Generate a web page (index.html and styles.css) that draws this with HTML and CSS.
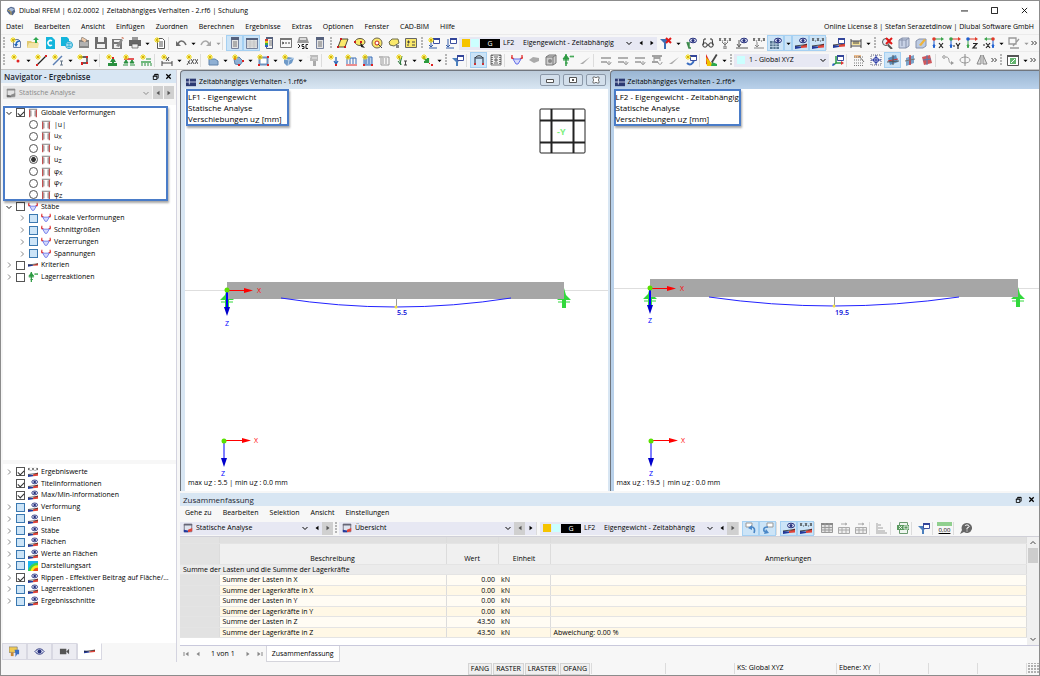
FILE: index.html
```html
<!DOCTYPE html>
<html lang="de">
<head>
    <meta charset="UTF-8">
    <meta name="viewport" content="width=device-width, initial-scale=1.0">
    <title>Dlubal RFEM | 6.02.0002 | Zeitabhängiges Verhalten - 2.rf6 | Schulung</title>
    <link rel="stylesheet" href="styles.css">
</head>
<body>
    <!-- Symbole -->
    <svg class="sprite" aria-hidden="true">
        <defs>
            <g id="star"><path d="M3 0v6M0 3h6M1 1l4 4M5 1L1 5" stroke="#f2de1c" stroke-width="1"/><circle cx="3" cy="3" r="1.3" fill="#d9b400"/></g>
            <g id="eye"><ellipse cx="8" cy="3.500" rx="3.500" ry="2.300" fill="#dfe3f5" stroke="#26307c"/><circle cx="8" cy="3.500" r="1.500" fill="#26307c"/></g>
            <g id="ramp"><path d="M0 12V9l6 .5V11z" fill="#233a9c"/><path d="M6 9l6-2.500v4L6 11z" fill="#e0453a"/><path d="M0 9l12-1.500" stroke="#222" stroke-width=".8"/></g>
            <g id="win"><path d="M5.500 1.500h6v5h-6z" fill="#fff" stroke="#3c4f9e"/><path d="M5 1h7v2H5z" fill="#33459a"/></g>
            <g id="dots"><path d="M0 1l2 3M2 1L0 4M5 1l2 3M7 1L5 4M10 1l2 3M12 1l-2 3M3 4h1M8 4h1" stroke="#333" stroke-width=".8"/></g>
        </defs>
        <symbol id="app" viewBox="0 0 12 12"><path d="M2 3l4-2 4 1 1 5-3 4-4-1-3-4z" fill="#53688e"/><path d="M3 4l3-2 4 2-3 3z" fill="#a9bcd8"/><path d="M2 5l4 2v4" stroke="#d8b24a" fill="none"/></symbol>
        <symbol id="new" viewBox="0 0 12 12"><path d="M3.500 2.500h5l2 2v6h-7z" fill="#e9f0fa" stroke="#6c7fa6"/><path d="M10 4c-3 0-4 2-4 4" stroke="#2467b8" fill="none" stroke-width="1.500"/><path d="M4 7h4l-2 3z" fill="#2467b8"/><use href="#star"/></symbol>
        <symbol id="open" viewBox="0 0 12 12"><path d="M0 4h4l1 1h6v6H0z" fill="#e0c871"/><path d="M2 6h10l-1 5H0z" fill="#f3e4a6"/><path d="M9 0l3 3h-2v3H8V3H6z" fill="#2da84f"/></symbol>
        <symbol id="cloud" viewBox="0 0 12 12"><path d="M2 0h6l3 3v9H2z" fill="#14b5dc"/><path d="M8 4a2.500 2.500 0 1 0 0 4" stroke="#fff" fill="none" stroke-width="1.500"/></symbol>
        <symbol id="cloudnet" viewBox="0 0 12 12"><path d="M0 0h6l2 2v7H0z" fill="#14b5dc"/><circle cx="8" cy="8" r="3.500" fill="#eefaff" stroke="#14a4d0"/><path d="M5 8h6M8 5v6M5.500 6.500h5M5.500 9.500h5" stroke="#14a4d0" stroke-width=".7"/></symbol>
        <symbol id="brief" viewBox="0 0 12 12"><path d="M1 3h10v8H1z" fill="#858585"/><path d="M4 0l5 3-2 3-4-3z" fill="#eec9a8" stroke="#555" stroke-width=".5"/><path d="M2 6h8M2 8h8" stroke="#ddd"/></symbol>
        <symbol id="save" viewBox="0 0 12 12"><path d="M0 0h11l1 1v11H0z" fill="#6e6e6e"/><path d="M3 0h6v5H3zM2 7h8v4H2z" fill="#f1f1f1"/></symbol>
        <symbol id="saveas" viewBox="0 0 12 12"><path d="M0 2h10v10H0z" fill="#777"/><path d="M2 3h6v2H2zM2 7h6v4H2z" fill="#f1f1f1"/><path d="M4 9l5-7 2 1-4 7z" fill="#8b8b8b"/><path d="M9 1l2-1 1 2z" fill="#cf6a4a"/></symbol>
        <symbol id="print" viewBox="0 0 12 12"><path d="M3 0h6v3H3z" fill="#999"/><path d="M0 3h12v6H0z" fill="#666"/><path d="M3 7h6v4H3z" fill="#eee" stroke="#555" stroke-width=".7"/></symbol>
        <symbol id="report" viewBox="0 0 12 12"><path d="M3.500 1.500h5l2 2v8h-7z" fill="#fff" stroke="#555"/><path d="M5 5h4M5 7h4M5 9h4" stroke="#555"/><use href="#star"/></symbol>
        <symbol id="undo" viewBox="0 0 12 12"><path d="M3 7c2-4 6-4 8 1" stroke="#6b6b6b" fill="none" stroke-width="1.500"/><path d="M1 4v5h5z" fill="#6b6b6b"/></symbol>
        <symbol id="redo" viewBox="0 0 12 12"><path d="M9 7c-2-4-6-4-8 1" stroke="#a9a9a9" fill="none" stroke-width="1.500"/><path d="M11 4v5H6z" fill="#a9a9a9"/></symbol>
        <symbol id="panel" viewBox="0 0 12 12"><path d="M2.500 .5h7v11h-7z" fill="#e4e4e4" stroke="#76819c"/><path d="M2 0h8v3H2z" fill="#56617c"/><path d="M4 5h4M4 7h4M4 9h4" stroke="#777"/></symbol>
        <symbol id="sheet" viewBox="0 0 12 12"><path d="M.5 1.500h11v10H.5z" fill="#e2e2e2" stroke="#76819c"/><path d="M0 1h12v2H0z" fill="#56617c"/><path d="M1 5h10M1 7h10M1 9h10M4 3v8M8 3v8" stroke="#bbb" stroke-width=".7"/></symbol>
        <symbol id="scale" viewBox="0 0 12 12"><path d="M3.500 .5h6v11h-6z" fill="#f4f4f4" stroke="#56617c"/><path d="M3 0h7v2H3z" fill="#56617c"/><path d="M2 2h3v2H2z" fill="#d43c2e"/><path d="M2 4h3v2H2z" fill="#e9c417"/><path d="M2 6h3v2H2z" fill="#35a84a"/><path d="M2 8h3v2H2z" fill="#2d5fc4"/><path d="M6 4h3M6 6h3M6 8h3" stroke="#777"/></symbol>
        <symbol id="console" viewBox="0 0 12 12"><path d="M.5 1.500h11v9H.5z" fill="#f8f8f8" stroke="#777"/><path d="M0 1h12v2H0z" fill="#777"/><path d="M2 5l2 1-2 1M5 6h2M8 6h2" stroke="#444" fill="none"/></symbol>
        <symbol id="script" viewBox="0 0 12 12"><path d="M2 0h8l2 6H0z" fill="#999"/><path d="M3 1h6v2H3z" fill="#ddd"/><path d="M1 7l2 2-2 2M7 7.500H5v2h2v2H5M11 7.500H9v4h2" stroke="#222" fill="none"/></symbol>
        <symbol id="sel" viewBox="0 0 12 12"><path d="M4 2h7L8 10H1z" fill="#fbe96b" stroke="#4d4d3d"/><path d="M3 1h2v2H3zM0 9h2v2H0zM7 9h2v2H7z" fill="#c92020"/></symbol>
        <symbol id="lasso" viewBox="0 0 12 12"><ellipse cx="6" cy="5" rx="5" ry="3.500" fill="#fbe96b" stroke="#5d5540"/><path d="M6 5l5 6-4-1z" fill="#222"/><path d="M0 4h2v2H0zM6 4h2v2H6z" fill="#c92020"/></symbol>
        <symbol id="ring" viewBox="0 0 12 12"><circle cx="6" cy="6" r="5" fill="#fbe96b" stroke="#6d6550"/><circle cx="6" cy="6" r="2" fill="#fff" stroke="#c92020"/><path d="M7 7l4 4" stroke="#444"/></symbol>
        <symbol id="poly" viewBox="0 0 12 12"><path d="M1 5l3-3h6l1 4-5 3-4-1z" fill="#fbe96b" stroke="#6c6c4c"/><path d="M8 8h3v3H8z" fill="#888"/></symbol>
        <symbol id="calc" viewBox="0 0 12 12"><path d="M.5 1.500h11v9H.5z" fill="#fbe96b" stroke="#666"/><path d="M2 5h3M3.500 3.500v3M7 5h3M2 8h2M7 8h3" stroke="#444"/></symbol>
        <symbol id="loadnew" viewBox="0 0 12 12"><path d="M3 4v6M1 8l2 2 2-2M1 11h8" stroke="#345da8" fill="none"/><use href="#win"/><use href="#star"/></symbol>
        <symbol id="load" viewBox="0 0 12 12"><path d="M3 2v8M1 8l2 2 2-2M1 11h8" stroke="#345da8" fill="none"/><use href="#win"/></symbol>
        <symbol id="filterx" viewBox="0 0 12 12"><path d="M0 2h9L6 6v6H4V6z" fill="#3c6fb5"/><path d="M6 1l5 5M11 1L6 6" stroke="#e01818" stroke-width="2"/></symbol>
        <symbol id="filter" viewBox="0 0 12 12"><path d="M0 4h9L6 8v4H4V8z" fill="#4b7fbd"/><use href="#win"/></symbol>
        <symbol id="eyemark" viewBox="0 0 12 12"><path d="M2 5l2 6h2M4 5v6" stroke="#3b8a4b" fill="none" stroke-width="1.500"/><use href="#eye"/></symbol>
        <symbol id="glasses" viewBox="0 0 12 12"><circle cx="3" cy="8" r="2.200" fill="none" stroke="#333"/><circle cx="9" cy="8" r="2.200" fill="none" stroke="#333"/><path d="M1 8l1-6h2M11 8l-1-6H8M5 8h2" stroke="#333" fill="none"/></symbol>
        <symbol id="xvals" viewBox="0 0 12 12"><use href="#dots"/><path d="M6 5v3M3 5l3 3M9 5L6 8M5 9h2v3H5z" stroke="#777" fill="none"/></symbol>
        <symbol id="eyeload" viewBox="0 0 12 12"><path d="M3 3v6M1 7l2 3 2-3M0 11h12" stroke="#555" fill="none"/><use href="#eye"/></symbol>
        <symbol id="xload" viewBox="0 0 12 12"><use href="#dots"/><path d="M4 5v5M2 8l2 2 2-2M1 11h10" stroke="#888" fill="none"/></symbol>
        <symbol id="eyegrid" viewBox="0 0 12 12"><path d="M0 4h9v8H0z" fill="#557690"/><path d="M0 7h9M0 9.500h9M3 4v8M6 4v8" stroke="#c6dcec" stroke-width=".8"/><use href="#eye"/></symbol>
        <symbol id="eyeramp" viewBox="0 0 12 12"><use href="#ramp"/><use href="#eye"/></symbol>
        <symbol id="xramp" viewBox="0 0 12 12"><use href="#ramp"/><use href="#dots"/></symbol>
        <symbol id="rampwin" viewBox="0 0 12 12"><use href="#ramp" y="-1"/><use href="#win"/></symbol>
        <symbol id="rampi" viewBox="0 0 12 12"><path d="M0 8V5l6 1v1z" fill="#233a9c"/><path d="M6 6l6-2v2.500L6 7z" fill="#e0453a"/><path d="M0 6l12-1.500" stroke="#222" stroke-width=".8"/></symbol>
        <symbol id="ruler" viewBox="0 0 12 12"><path d="M1 2v9M11 2v9M1 4h10M1 9h10" stroke="#444"/><path d="M2 5h8v3H2z" fill="#f3e19a"/><path d="M4 4v3M6 4v3M8 4v3" stroke="#444"/></symbol>
        <symbol id="zoomx" viewBox="0 0 12 12"><circle cx="5" cy="5" r="3.500" fill="#e8eef5" stroke="#555"/><path d="M7 8l4 4" stroke="#555" stroke-width="2"/><path d="M5 1l6 6M11 1L5 7" stroke="#e01818" stroke-width="2"/></symbol>
        <symbol id="box" viewBox="0 0 12 12"><path d="M1 3l3-2h7v8l-3 2H1z" fill="#c8d2e6" stroke="#8792ac"/><path d="M1 3h7v8M8 3l3-2M4 1v8" stroke="#8792ac" fill="none"/></symbol>
        <symbol id="boxpen" viewBox="0 0 12 12"><path d="M1 4l3-2h7v7l-3 2H1z" fill="#bccbe3" stroke="#8792ac"/><path d="M4 8l5-6 2 1-5 6z" fill="#efb43a"/></symbol>
        <symbol id="axx" viewBox="0 0 12 12"><path d="M2 2h7" stroke="#3aa34a"/><path d="M2 2v6M1 8l1 3 1-3z" stroke="#1e5fd0" fill="#1e5fd0"/><path d="M9 0l3 2-3 2z" fill="#3aa34a"/><circle cx="2" cy="2" r="1.800" fill="#e03a2a"/><path d="M7 6l4 5M11 6l-4 5" stroke="#222" stroke-width="1.200"/></symbol>
        <symbol id="axy" viewBox="0 0 12 12"><path d="M2 2h7" stroke="#e03a2a"/><path d="M2 2v6M1 8l1 3 1-3z" stroke="#1e5fd0" fill="#1e5fd0"/><path d="M9 0l3 2-3 2z" fill="#e03a2a"/><circle cx="2" cy="2" r="1.800" fill="#3aa34a"/><path d="M7 6l2 3 2-3M9 9v3M4 9h2" stroke="#222" fill="none" stroke-width="1.200"/></symbol>
        <symbol id="axz" viewBox="0 0 12 12"><path d="M2 2h7" stroke="#e03a2a"/><path d="M2 2v6M1 8l1 3 1-3z" stroke="#3aa34a" fill="#3aa34a"/><path d="M9 0l3 2-3 2z" fill="#e03a2a"/><circle cx="2" cy="2" r="1.800" fill="#1e5fd0"/><path d="M7 6.500h4l-4 4.500h4" stroke="#222" fill="none" stroke-width="1.200"/></symbol>
        <symbol id="axmx" viewBox="0 0 12 12"><path d="M10 2H4" stroke="#3aa34a"/><path d="M4 0L1 2l3 2z" fill="#3aa34a"/><path d="M10 2v6M9 8l1 3 1-3z" stroke="#1e5fd0" fill="#1e5fd0"/><circle cx="10" cy="2" r="1.800" fill="#e03a2a"/><path d="M3 6l4 5M7 6l-4 5M0 8h2" stroke="#222" stroke-width="1.200"/></symbol>
        <symbol id="axes" viewBox="0 0 12 12"><path d="M4 2v7l-3 2M4 9h6" stroke="#2a9a45" fill="none" stroke-width="1.500"/><path d="M9 7l3 2-3 2z" fill="#d33"/><path d="M0 12l1-3 2 2z" fill="#2452c8"/><use href="#win"/></symbol>
        <symbol id="measure" viewBox="0 0 12 12"><path d="M1 1h7v6H1zM2 11h9M11 2L5 9" stroke="#999" fill="none" stroke-width="1.300"/></symbol>
        <symbol id="node" viewBox="0 0 12 12"><circle cx="8" cy="7" r="1.500" fill="#e02222"/><use href="#star" x="1"/></symbol>
        <symbol id="line" viewBox="0 0 12 12"><path d="M2 11l9-9" stroke="#222" stroke-width="1.300"/><use href="#star"/><path d="M1 10h2v2H1zM10 1h2v2h-2z" fill="#d22"/></symbol>
        <symbol id="member" viewBox="0 0 12 12"><path d="M1 11l9-9" stroke="#5b7fb4" stroke-width="1.500"/><path d="M8 7h3M9.500 7v4M8 11h3" stroke="#678"/><use href="#star"/></symbol>
        <symbol id="arc" viewBox="0 0 12 12"><path d="M3 3h7v6H6" stroke="#333" fill="none" stroke-width="1.300"/><path d="M9 2h2v2H9zM9 8h2v2H9zM4 8h2v3H4z" fill="#d22"/><use href="#star"/></symbol>
        <symbol id="support" viewBox="0 0 12 12"><path d="M7 3l3 5H8v1h3v3H2V9h4V8H4z" fill="#29903f"/><path d="M6 3h2v2H6z" fill="#d22"/><use href="#star"/></symbol>
        <symbol id="support2" viewBox="0 0 12 12"><path d="M1 5h10" stroke="#d22" stroke-width="1.500"/><path d="M3 6l2 3H1zM9 6l2 3H7zM0 11h5M7 11h5" stroke="#29903f" fill="#29903f"/><use href="#star"/></symbol>
        <symbol id="support3" viewBox="0 0 12 12"><path d="M1 7h10v2H1z" fill="#6db87b"/><path d="M2 9v3M5 9v3M8 9v3M11 9v3M6 5h5" stroke="#29903f"/><use href="#star"/></symbol>
        <symbol id="dim" viewBox="0 0 12 12"><path d="M1 7v5M11 7v5M1 9h10M5 3l3 4M8 3l-3 4" stroke="#444"/><use href="#star"/></symbol>
        <symbol id="dim2" viewBox="0 0 12 12"><path d="M1 11l3-5M4 10L2 7M5 5l3 5M8 5l-3 5M9 5l3 5M12 5l-3 5" stroke="#444" stroke-width=".9"/><use href="#star"/></symbol>
        <symbol id="surface" viewBox="0 0 12 12"><path d="M2 5h6l3 2v4H2z" fill="#8fb0d4" stroke="#5f82ab"/><use href="#star"/></symbol>
        <symbol id="solid" viewBox="0 0 12 12"><path d="M2 5l5-2 4 4-3 4-5-1z" fill="#8fb0d4" stroke="#5f82ab"/><path d="M2 4h2v2H2zM10 6h2v2h-2zM6 10h2v2H6z" fill="#d22"/><use href="#star"/></symbol>
        <symbol id="opening" viewBox="0 0 12 12"><path d="M2.500 3.500h8v7h-8z" fill="#fff" stroke="#6f93c0" stroke-width="2"/><path d="M1 10h2v2H1zM10 10h2v2h-2zM10 2h2v2h-2z" fill="#d22"/><use href="#star"/></symbol>
        <symbol id="cube" viewBox="0 0 12 12"><path d="M2 5l4-2 6 1-2 5-5 3-3-3z" fill="#6f9ac8"/><path d="M2 5l5 1 5-2M7 6l-1 6" stroke="#cfe2f4" fill="none" stroke-width=".8"/><use href="#star"/></symbol>
        <symbol id="stamp" viewBox="0 0 12 12"><path d="M3 1h8v6H3z" fill="#bbb"/><path d="M6 7h3v5H6z" fill="#aaa"/><path d="M0 3h4M5 4h5" stroke="#eee"/></symbol>
        <symbol id="nodeload" viewBox="0 0 12 12"><path d="M8 3v6M6 7l2 3 2-3" stroke="#2e68b7" fill="none" stroke-width="1.300"/><use href="#star"/><path d="M7 10h2v2H7z" fill="#d22"/></symbol>
        <symbol id="lineload" viewBox="0 0 12 12"><path d="M1 4h10M2 4v6M5 4v6M8 4v6M11 4v6" stroke="#3a6fb7"/><path d="M1 11h11" stroke="#d22"/><use href="#star"/></symbol>
        <symbol id="areaload" viewBox="0 0 12 12"><path d="M2 3h8v8H2z" fill="#bcd2ec" stroke="#3a6fb7"/><path d="M4 4v6M7 4v6" stroke="#3a6fb7"/><path d="M1 10h2v2H1zM9 10h2v2H9z" fill="#d22"/><use href="#star"/></symbol>
        <symbol id="grayload" viewBox="0 0 12 12"><path d="M2 3h8v8H2zM4 4v6M7 4v6" fill="none" stroke="#999"/><path d="M0 3h4" stroke="#bbb" stroke-width="2"/></symbol>
        <symbol id="imperf" viewBox="0 0 12 12"><path d="M3 2l2 9M6 2l-2 8M2 7l3 4" stroke="#2c7a3b" fill="none"/><path d="M8 7h3M9.500 7v4M8 11h3" stroke="#444"/><use href="#star"/></symbol>
        <symbol id="plant" viewBox="0 0 12 12"><path d="M2 3l4 4M3 8l4 0V4" stroke="#2c9a3b" fill="none" stroke-width="2.200"/><path d="M8 9h1v1H8zM10 10h2v2h-2z" fill="#d22"/><use href="#star"/></symbol>
        <symbol id="frame" viewBox="0 0 12 12"><path d="M2 11V4h8v7" fill="none" stroke="#55657a" stroke-width="1.500"/><path d="M2 4c2-3 6-3 8 0" fill="none" stroke="#333"/><path d="M1 9h2v2H1zM9 9h2v2H9z" fill="#c33"/></symbol>
        <symbol id="framered" viewBox="0 0 12 12"><path d="M2 2v9M10 2v9" fill="none" stroke="#c24b4b" stroke-width="1.500"/><path d="M1 1.500h10M3.500 3v7M8.500 3v7" fill="none" stroke="#666"/></symbol>
        <symbol id="film" viewBox="0 0 12 12"><path d="M1 1h10v10H1z" fill="#eee" stroke="#777"/><path d="M2 1v10M10 1v10" stroke="#555" stroke-width="1.500" stroke-dasharray="1 1"/><path d="M4 3h4M4 9h4M6 4v4M4 6h4" fill="none" stroke="#666"/></symbol>
        <symbol id="bend" viewBox="0 0 12 12"><path d="M1 1v4M11 1v4M0 3l3 2M12 3L9 5" stroke="#e03333" stroke-width="1.300"/><path d="M2 5h8L7 10H5z" fill="#d6d9fb" stroke="#6470e8"/></symbol>
        <symbol id="slab" viewBox="0 0 12 12"><path d="M1 6l4-3 6 1v3L6 9z" fill="#aaa"/></symbol>
        <symbol id="solidg" viewBox="0 0 12 12"><path d="M1 3l3-2h7v8l-3 2H1z" fill="#ccc" stroke="#777"/><path d="M1 3h7v8M8 3l3-2" stroke="#777" fill="none"/><circle cx="5" cy="7" r="2" fill="#888"/></symbol>
        <symbol id="react" viewBox="0 0 12 12"><path d="M4 0v12" stroke="#2d9a42" stroke-width="1.500"/><path d="M1 5l3-4 3 4zM1 6h6M3 9h3" fill="#2d9a42" stroke="#2d9a42"/><path d="M8 2h4v1H8z" fill="#6cbf79" stroke="#2d9a42" stroke-width=".6"/></symbol>
        <symbol id="slope" viewBox="0 0 12 12"><path d="M1 10l10-7-7 7z" fill="#aaa"/></symbol>
        <symbol id="sect" viewBox="0 0 12 12"><path d="M1 4h10M1 8h6" stroke="#999" stroke-width="1.300"/><path d="M7 8c0 3 4 3 4 0M9 7v4" stroke="#999" fill="none"/></symbol>
        <symbol id="sectx" viewBox="0 0 12 12"><path d="M1 2h10M3 4h6M1 8h6" stroke="#888" stroke-width="1.300"/><path d="M7 8c0 3 4 3 4 0M3 2v5M9 2v5" stroke="#999" fill="none"/></symbol>
        <symbol id="sectnew" viewBox="0 0 12 12"><path d="M2 9c3 3 6 1 7-3" stroke="#3c6fc2" fill="none" stroke-width="2"/><use href="#win"/><use href="#star"/></symbol>
        <symbol id="colors" viewBox="0 0 12 12"><path d="M0 0l6 12L0 10z" fill="#d22"/><path d="M0 3l8 9H1z" fill="#f0c400"/><path d="M5 12l1-4 5 2v2z" fill="#2da84f"/><path d="M5 8l5-8 1.500 1-5 8z" fill="#444"/></symbol>
        <symbol id="gridset" viewBox="0 0 12 12"><path d="M1 1h7v3H1z" fill="#eab98a"/><path d="M1 3h10M1 6h10M1 9h10M1 11.500h10" stroke="#777" stroke-dasharray="1 1"/><path d="M6 2l5 6" stroke="#777"/></symbol>
        <symbol id="snap" viewBox="0 0 12 12"><path d="M1 1h10v10H1z" fill="none" stroke="#667" stroke-dasharray="1 1"/><circle cx="6" cy="6" r="2.500" fill="#fff" stroke="#2030a0"/><path d="M6 1v10M1 6h10" stroke="#2030a0"/></symbol>
        <symbol id="plane" viewBox="0 0 12 12"><path d="M1 4l8-3 2 7-8 3z" fill="#5a8fbe"/><path d="M1 7l10-2" stroke="#c33"/><path d="M0 8l12-1M6 1v10" stroke="#555"/></symbol>
        <symbol id="planey" viewBox="0 0 12 12"><path d="M2 4l8-3v8l-8 3z" fill="#7aa3c9"/><path d="M6 1v10" stroke="#c33" stroke-width="1.500"/><path d="M1 7l10-2" stroke="#777"/></symbol>
        <symbol id="planez" viewBox="0 0 12 12"><path d="M1 3l8-2 2 8-8 2z" fill="#d0575c"/><path d="M2 6l8-1M6 1v10" stroke="#4d82b8"/></symbol>
        <symbol id="move" viewBox="0 0 12 12"><circle cx="2" cy="3" r="1.300" fill="none" stroke="#999"/><path d="M4 3c5 0 1 7 6 6" stroke="#999" fill="none"/><path d="M9 7l3 2-3 2z" fill="#999"/></symbol>
        <symbol id="rotate" viewBox="0 0 12 12"><ellipse cx="6" cy="6" rx="5" ry="3" fill="none" stroke="#999"/><path d="M6 0v12" stroke="#888"/></symbol>
        <symbol id="mirror" viewBox="0 0 12 12"><path d="M5 1v9H1zM7 1v9h4z" fill="#ddd" stroke="#888"/></symbol>
        <symbol id="viewset" viewBox="0 0 12 12"><path d="M.5 1.500h11v10H.5z" fill="#fff" stroke="#555"/><path d="M0 1h12v2H0z" fill="#555"/><path d="M3 4h6v6H3z" fill="#62b36e"/><path d="M4 9l4-4" stroke="#fff"/></symbol>
        <symbol id="result" viewBox="0 0 12 12"><path d="M1.500 1.500h9v9h-9z" fill="#dfe3ee" stroke="#667"/><path d="M1 1h10v2H1z" fill="#667"/><path d="M1 8l5 1v2H1z" fill="#233a9c"/><path d="M6 8l5-2v4l-5 1z" fill="#e0453a"/></symbol>
        <symbol id="link1" viewBox="0 0 12 12"><path d="M1 1h6v4H1z" fill="#fff" stroke="#999"/><path d="M6 5c4 0 4 3 3 6" stroke="#4a87c7" fill="none" stroke-width="1.600"/><path d="M3 6l4-3v5z" fill="#4a87c7"/></symbol>
        <symbol id="link2" viewBox="0 0 12 12"><path d="M5 1h6v4H5z" fill="#fff" stroke="#999"/><path d="M6 5c-5 0-5 3-3 5" stroke="#4a87c7" fill="none" stroke-width="1.600"/><path d="M2 12l5-1-3-4z" fill="#4a87c7"/></symbol>
        <symbol id="rows" viewBox="0 0 12 12"><path d="M.5 1.500h11v9H.5z" fill="#e2e2e2" stroke="#999"/><path d="M0 1h12v2H0z" fill="#888"/><path d="M0 5.500h12M0 8h12M4 1v10M8 1v10" stroke="#999"/></symbol>
        <symbol id="rowsup" viewBox="0 0 12 12"><path d="M.5 5.500h11v6H.5z" fill="#eee" stroke="#aaa"/><path d="M0 8h12M4 5v6M8 5v6M3 2h5M7 1l2 1-2 1" stroke="#aaa" fill="none"/></symbol>
        <symbol id="chart" viewBox="0 0 12 12"><path d="M1 1v10h10M2 3h3M2 6h5M2 9h7" stroke="#ccc" fill="none" stroke-width="2"/></symbol>
        <symbol id="excel" viewBox="0 0 12 12"><path d="M2.500 .5h8v11h-8z" fill="#eef6ef" stroke="#6b9a70"/><path d="M0 3h12v5H0z" fill="#5a9a5f"/><path d="M2 4l3 3M5 4L2 7M7 4h4v3H7z" stroke="#fff" fill="none" stroke-width=".8"/></symbol>
        <symbol id="help" viewBox="0 0 12 12"><path d="M7 1a5 5 0 1 1-3 9l-4 2 2-4a5 5 0 0 1 5-7z" fill="#666"/><path d="M5 4c1-2 5-1 4 1L7 6v1.500M7 8.500v1" stroke="#fff" fill="none"/></symbol>
        <symbol id="data" viewBox="0 0 12 12"><path d="M0 1h9v6H0z" fill="#f0ca52" stroke="#777" stroke-width=".7"/><path d="M6 4h5v5H9l-2 3V8z" fill="#3c6fc2"/><path d="M2 7h3v4H2z" fill="#c98832"/></symbol>
        <symbol id="eyebig" viewBox="0 0 12 12"><path d="M1 6c3-4 7-4 10 0-3 4-7 4-10 0z" fill="#dfe3f5" stroke="#26307c"/><circle cx="6" cy="6" r="2.200" fill="#26307c"/></symbol>
        <symbol id="camera" viewBox="0 0 12 12"><path d="M1 3h7v6H1zM8 6l3-3v6z" fill="#555"/></symbol>
        <symbol id="rainbow" viewBox="0 0 12 12"><path d="M0 0h12v12H0z" fill="#19b7ee"/><path d="M0 12A12 12 0 0 1 12 2v10z" fill="#3bd64d"/><path d="M3 12a9 9 0 0 1 9-7v7z" fill="#f7ec1a"/><path d="M6 12a6 6 0 0 1 6-4v4z" fill="#f0501c"/></symbol>
        <symbol id="file" viewBox="0 0 12 12"><path d="M0 2h12v9H0z" fill="#2c3a72"/><path d="M4 2v7M0 6h12" stroke="#dfe6f6"/></symbol>
        <symbol id="down" viewBox="0 0 6 6"><path d="M.5 2h5L3 4.800z" fill="currentColor"/></symbol>
        <symbol id="prev" viewBox="0 0 6 6"><path d="M4.500 .8v4.400L1.500 3z" fill="currentColor"/></symbol>
        <symbol id="next" viewBox="0 0 6 6"><path d="M1.500 .8v4.400L4.500 3z" fill="currentColor"/></symbol>
        <symbol id="first" viewBox="0 0 6 6"><path d="M5.500 .8v4.400L2.500 3zM.5 1h1v4h-1z" fill="currentColor"/></symbol>
        <symbol id="last" viewBox="0 0 6 6"><path d="M.5 .8v4.400L3.500 3zM4.500 1h1v4h-1z" fill="currentColor"/></symbol>
        <symbol id="chev" viewBox="0 0 6 6"><path d="M.5 2l2.500 2.500L5.500 2" fill="none" stroke="currentColor"/></symbol>
        <symbol id="chevr" viewBox="0 0 6 6"><path d="M2 .5l2.500 2.500L2 5.500" fill="none" stroke="currentColor"/></symbol>
        <symbol id="chevu" viewBox="0 0 6 6"><path d="M.5 4l2.500-2.500L5.500 4" fill="none" stroke="currentColor"/></symbol>
        <symbol id="more" viewBox="0 0 6 6"><path d="M.5 1l2 2-2 2M3.500 1l2 2-2 2" fill="none" stroke="currentColor" stroke-width=".8"/></symbol>
        <symbol id="close" viewBox="0 0 8 8"><path d="M1 1l6 6M7 1L1 7" stroke="currentColor" fill="none"/></symbol>
        <symbol id="closeb" viewBox="0 0 8 8"><path d="M1.500 1.500l5 5M6.500 1.500l-5 5" stroke="currentColor" stroke-width="1.500" fill="none"/></symbol>
        <symbol id="closeo" viewBox="0 0 8 8"><path d="M1 1h2l1 1 1-1h2v2L6 4l1 1v2H5L4 6 3 7H1V5l1-1-1-1z" fill="#fff" stroke="currentColor" stroke-width=".8"/></symbol>
        <symbol id="max" viewBox="0 0 8 8"><path d="M.5 .5h7v7h-7z" stroke="currentColor" fill="none"/></symbol>
        <symbol id="maxo" viewBox="0 0 8 8"><path d="M.5 1.500h7v5h-7z" stroke="currentColor" fill="#fff"/><path d="M3 3h2v2H3z" fill="currentColor"/></symbol>
        <symbol id="min" viewBox="0 0 8 8"><path d="M0 4.500h8" stroke="currentColor"/></symbol>
        <symbol id="mino" viewBox="0 0 8 8"><path d="M.5 3.500h7v3h-7z" stroke="currentColor" fill="#fff"/></symbol>
        <symbol id="float" viewBox="0 0 8 8"><path d="M1.500 3.500h4v4h-4zM3 3V1.500h4V6H6" stroke="currentColor" fill="none"/><path d="M1 3h5v1H1zM3 1h4v1H3z" fill="currentColor"/></symbol>
        <symbol id="hold" viewBox="0 0 14 20"><path d="M7 0l2 7 5 5H9v8H5v-8H0l5-5z" fill="#32d83c"/><path d="M1 14h12" stroke="#32d83c"/></symbol>
    </svg>

    <div class="app">
        <header class="titlebar">
            <svg class="ico"><use href="#app"/></svg>
            <h1>Dlubal RFEM | 6.02.0002 | Zeitabhängiges Verhalten - 2.rf6 | Schulung</h1>
            <button class="win-btn" title="Minimieren"><svg><use href="#min"/></svg></button>
            <button class="win-btn" title="Maximieren"><svg><use href="#max"/></svg></button>
            <button class="win-btn" title="Schließen"><svg><use href="#close"/></svg></button>
        </header>

        <nav class="menubar">
            <a href="#">Datei</a>
            <a href="#">Bearbeiten</a>
            <a href="#">Ansicht</a>
            <a href="#">Einfügen</a>
            <a href="#">Zuordnen</a>
            <a href="#">Berechnen</a>
            <a href="#">Ergebnisse</a>
            <a href="#">Extras</a>
            <a href="#">Optionen</a>
            <a href="#">Fenster</a>
            <a href="#">CAD-BIM</a>
            <a href="#">Hilfe</a>
            <span class="license">Online License 8 | Stefan Serazetdinow | Dlubal Software GmbH</span>
        </nav>

        <!-- Symbolleiste 1 -->
        <div class="toolbar">
            <i class="grip"></i>
            <button class="tb" title="Neu"><svg><use href="#new"/></svg></button>
            <button class="tb" title="Öffnen"><svg><use href="#open"/></svg></button>
            <button class="tb" title="Dlubal Center"><svg><use href="#cloud"/></svg></button>
            <button class="tb" title="Cloud"><svg><use href="#cloudnet"/></svg></button>
            <button class="tb" title="Modelle verwalten"><svg><use href="#brief"/></svg></button>
            <button class="tb" title="Speichern"><svg><use href="#save"/></svg></button>
            <button class="tb" title="Speichern unter"><svg><use href="#saveas"/></svg></button>
            <button class="tb" title="Drucken"><svg><use href="#print"/></svg></button>
            <button class="drop" title="Druckoptionen"><svg><use href="#down"/></svg></button>
            <button class="tb" title="Ausdruckprotokoll"><svg><use href="#report"/></svg></button>
            <i class="sep"></i>
            <button class="tb" title="Rückgängig"><svg><use href="#undo"/></svg></button>
            <button class="drop" title="Rückgängig-Liste"><svg><use href="#down"/></svg></button>
            <button class="tb" title="Wiederherstellen"><svg><use href="#redo"/></svg></button>
            <button class="drop off" title="Wiederherstellen-Liste"><svg><use href="#down"/></svg></button>
            <i class="sep"></i>
            <button class="tb on" title="Navigator"><svg><use href="#panel"/></svg></button>
            <button class="tb on" title="Tabellen"><svg><use href="#sheet"/></svg></button>
            <button class="tb" title="Steuerpanel"><svg><use href="#scale"/></svg></button>
            <button class="tb" title="Konsole"><svg><use href="#console"/></svg></button>
            <button class="tb" title="Skript"><svg><use href="#script"/></svg></button>
            <button class="tb" title="Eigenschaften"><svg><use href="#panel"/></svg></button>
            <i class="grip"></i>
            <button class="tb" title="Auswahl Raute"><svg><use href="#sel"/></svg></button>
            <button class="tb" title="Auswahl Ellipse"><svg><use href="#lasso"/></svg></button>
            <button class="tb" title="Auswahl Ring"><svg><use href="#ring"/></svg></button>
            <button class="tb" title="Auswahl Polygon"><svg><use href="#poly"/></svg></button>
            <button class="tb" title="Auswahl speziell"><svg><use href="#calc"/></svg></button>
            <i class="grip"></i>
            <button class="tb" title="Neuer Lastfall"><svg><use href="#loadnew"/></svg></button>
            <button class="tb" title="Lastfälle"><svg><use href="#load"/></svg></button>
            <div class="combo combo-case">
                <i class="swatch yellow"></i><i class="swatch cyan"></i><b class="tag">G</b><span class="case-no">LF2</span>
                <select aria-label="Lastfall"><option>Eigengewicht - Zeitabhängig</option></select>
                <svg><use href="#chev"/></svg>
            </div>
            <button class="step" title="Vorheriger"><svg><use href="#prev"/></svg></button>
            <button class="step" title="Nächster"><svg><use href="#next"/></svg></button>
            <button class="tb" title="Filter löschen"><svg><use href="#filterx"/></svg></button>
            <button class="drop" title="Filteroptionen"><svg><use href="#down"/></svg></button>
            <button class="tb" title="Lasten anzeigen"><svg><use href="#eyemark"/></svg></button>
            <button class="tb" title="Ergebnisse anzeigen"><svg><use href="#glasses"/></svg></button>
            <button class="tb" title="Werte"><svg><use href="#xvals"/></svg></button>
            <button class="tb" title="Last sichtbar"><svg><use href="#eyeload"/></svg></button>
            <button class="tb" title="Lastwerte"><svg><use href="#xload"/></svg></button>
            <button class="tb on" title="FE-Netz"><svg><use href="#eyegrid"/></svg></button>
            <button class="drop on" title="FE-Netz-Optionen"><svg><use href="#down"/></svg></button>
            <button class="tb on" title="Ergebnisse"><svg><use href="#eyeramp"/></svg></button>
            <button class="tb on" title="Ergebniswerte"><svg><use href="#xramp"/></svg></button>
            <i class="sep"></i>
            <button class="tb" title="Ergebnistabelle"><svg><use href="#rampwin"/></svg></button>
            <button class="tb" title="Maßstab"><svg><use href="#ruler"/></svg></button>
            <button class="drop" title="Maßstaboptionen"><svg><use href="#down"/></svg></button>
            <i class="grip"></i>
            <button class="tb" title="Zoom"><svg><use href="#zoomx"/></svg></button>
            <button class="tb" title="Isometrie"><svg><use href="#box"/></svg></button>
            <button class="tb" title="Ansicht bearbeiten"><svg><use href="#boxpen"/></svg></button>
            <button class="tb" title="Ansicht in X"><svg><use href="#axx"/></svg></button>
            <button class="tb" title="Ansicht gegen Y"><svg><use href="#axy"/></svg></button>
            <button class="tb" title="Ansicht in Z"><svg><use href="#axz"/></svg></button>
            <button class="tb" title="Ansicht gegen X"><svg><use href="#axmx"/></svg></button>
            <button class="drop" title="Ansichten"><svg><use href="#down"/></svg></button>
            <button class="tb" title="Messen"><svg><use href="#measure"/></svg></button>
            <button class="drop off" title="Messoptionen"><svg><use href="#down"/></svg></button>
            <button class="more" title="Mehr"><svg><use href="#more"/></svg></button>
        </div>

        <!-- Symbolleiste 2 -->
        <div class="toolbar">
            <i class="grip"></i>
            <button class="tb" title="Knoten"><svg><use href="#node"/></svg></button>
            <button class="drop" title="Knotentypen"><svg><use href="#down"/></svg></button>
            <button class="tb" title="Linie"><svg><use href="#line"/></svg></button>
            <button class="tb" title="Stab"><svg><use href="#member"/></svg></button>
            <button class="drop" title="Stabtypen"><svg><use href="#down"/></svg></button>
            <button class="tb" title="Bogen"><svg><use href="#arc"/></svg></button>
            <button class="drop" title="Bogentypen"><svg><use href="#down"/></svg></button>
            <i class="sep"></i>
            <button class="tb" title="Knotenlager"><svg><use href="#support"/></svg></button>
            <button class="tb" title="Linienlager"><svg><use href="#support2"/></svg></button>
            <button class="tb" title="Flächenlager"><svg><use href="#support3"/></svg></button>
            <i class="sep"></i>
            <button class="tb" title="Bemaßung"><svg><use href="#dim"/></svg></button>
            <button class="drop" title="Bemaßungstypen"><svg><use href="#down"/></svg></button>
            <button class="tb" title="Kommentar"><svg><use href="#dim2"/></svg></button>
            <i class="sep"></i>
            <button class="tb" title="Fläche"><svg><use href="#surface"/></svg></button>
            <button class="drop" title="Flächentypen"><svg><use href="#down"/></svg></button>
            <button class="tb" title="Freie Fläche"><svg><use href="#solid"/></svg></button>
            <button class="drop" title="Freie Flächentypen"><svg><use href="#down"/></svg></button>
            <button class="tb" title="Öffnung"><svg><use href="#opening"/></svg></button>
            <button class="drop" title="Öffnungstypen"><svg><use href="#down"/></svg></button>
            <button class="tb" title="Volumen"><svg><use href="#cube"/></svg></button>
            <button class="drop" title="Volumentypen"><svg><use href="#down"/></svg></button>
            <button class="tb" title="Block"><svg><use href="#stamp"/></svg></button>
            <i class="sep"></i>
            <button class="tb" title="Knotenlast"><svg><use href="#nodeload"/></svg></button>
            <button class="tb" title="Stablast"><svg><use href="#lineload"/></svg></button>
            <button class="tb" title="Flächenlast"><svg><use href="#areaload"/></svg></button>
            <button class="tb" title="Volumenlast"><svg><use href="#grayload"/></svg></button>
            <button class="tb" title="Imperfektion"><svg><use href="#imperf"/></svg></button>
            <button class="drop" title="Imperfektionstypen"><svg><use href="#down"/></svg></button>
            <button class="tb" title="Freie Last"><svg><use href="#plant"/></svg></button>
            <button class="drop" title="Freie Lasttypen"><svg><use href="#down"/></svg></button>
            <i class="grip"></i>
            <button class="tb" title="Filter"><svg><use href="#filter"/></svg></button>
            <i class="sep"></i>
            <button class="tb on" title="Verformungen"><svg><use href="#frame"/></svg></button>
            <button class="tb" title="Animation"><svg><use href="#film"/></svg></button>
            <i class="sep"></i>
            <button class="tb" title="Stabergebnisse"><svg><use href="#bend"/></svg></button>
            <button class="tb" title="Flächenergebnisse"><svg><use href="#slab"/></svg></button>
            <button class="tb" title="Volumenergebnisse"><svg><use href="#solidg"/></svg></button>
            <button class="tb" title="Lagerreaktionen"><svg><use href="#react"/></svg></button>
            <button class="tb" title="Verlauf"><svg><use href="#slope"/></svg></button>
            <i class="sep"></i>
            <button class="tb" title="Schnitt 1"><svg><use href="#sect"/></svg></button>
            <button class="tb" title="Schnitt 2"><svg><use href="#sect"/></svg></button>
            <button class="tb" title="Schnitt 3"><svg><use href="#sect"/></svg></button>
            <button class="tb" title="Schnitt 4"><svg><use href="#sectx"/></svg></button>
            <button class="tb" title="Schnitt 5"><svg><use href="#slope"/></svg></button>
            <button class="tb" title="Neuer Schnitt"><svg><use href="#sectnew"/></svg></button>
            <i class="sep"></i>
            <button class="tb" title="Farben"><svg><use href="#colors"/></svg></button>
            <button class="drop" title="Farboptionen"><svg><use href="#down"/></svg></button>
            <i class="grip"></i>
            <div class="combo combo-cs">
                <i class="swatch cyan"></i>
                <select aria-label="Koordinatensystem"><option>1 - Global XYZ</option></select>
                <svg><use href="#chev"/></svg>
            </div>
            <button class="tb" title="Achsen"><svg><use href="#axes"/></svg></button>
            <i class="sep"></i>
            <button class="tb" title="Rastereinstellungen"><svg><use href="#gridset"/></svg></button>
            <button class="tb" title="Fang"><svg><use href="#snap"/></svg></button>
            <button class="tb on" title="Ebene XY"><svg><use href="#plane"/></svg></button>
            <button class="tb" title="Ebene YZ"><svg><use href="#planey"/></svg></button>
            <button class="tb" title="Ebene XZ"><svg><use href="#planez"/></svg></button>
            <i class="sep"></i>
            <button class="tb" title="Verschieben"><svg><use href="#move"/></svg></button>
            <button class="tb" title="Drehen"><svg><use href="#rotate"/></svg></button>
            <button class="tb" title="Spiegeln"><svg><use href="#mirror"/></svg></button>
            <button class="more" title="Mehr"><svg><use href="#more"/></svg></button>
            <i class="grip"></i>
            <button class="tb" title="Ansichtseinstellung"><svg><use href="#viewset"/></svg></button>
            <button class="drop" title="Ansichtsoptionen"><svg><use href="#down"/></svg></button>
            <button class="more" title="Mehr"><svg><use href="#more"/></svg></button>
        </div>

        <main class="workspace">
            <!-- Navigator -->
            <aside class="navigator">
                <div class="panel-head">
                    <h2>Navigator - Ergebnisse</h2>
                    <button title="Lösen"><svg><use href="#float"/></svg></button>
                    <button title="Schließen"><svg><use href="#closeb"/></svg></button>
                </div>
                <div class="nav-select">
                    <div class="combo">
                        <svg class="ico gray"><use href="#result"/></svg>
                        <select aria-label="Analyse" disabled><option>Statische Analyse</option></select>
                        <svg><use href="#chev"/></svg>
                    </div>
                    <button class="step dark" title="Vorherige"><svg><use href="#prev"/></svg></button>
                    <button class="step dark" title="Nächste"><svg><use href="#next"/></svg></button>
                </div>

                <div class="nav-body">
                    <ul class="tree tree-results">
                        <li><button class="open" title="Zuklappen"><svg><use href="#chev"/></svg></button><label><input type="checkbox" checked><svg><use href="#framered"/></svg>Globale Verformungen</label></li>
                        <li class="sub"><label><input type="radio" name="u"><svg><use href="#framered"/></svg>|u|</label></li>
                        <li class="sub"><label><input type="radio" name="u"><svg><use href="#framered"/></svg><span>u<sub>X</sub></span></label></li>
                        <li class="sub"><label><input type="radio" name="u"><svg><use href="#framered"/></svg><span>u<sub>Y</sub></span></label></li>
                        <li class="sub"><label><input type="radio" name="u" checked><svg><use href="#framered"/></svg><span>u<sub>Z</sub></span></label></li>
                        <li class="sub"><label><input type="radio" name="u"><svg><use href="#framered"/></svg><span>φ<sub>X</sub></span></label></li>
                        <li class="sub"><label><input type="radio" name="u"><svg><use href="#framered"/></svg><span>φ<sub>Y</sub></span></label></li>
                        <li class="sub"><label><input type="radio" name="u"><svg><use href="#framered"/></svg><span>φ<sub>Z</sub></span></label></li>
                        <li><button class="open" title="Zuklappen"><svg><use href="#chev"/></svg></button><label><input type="checkbox"><svg><use href="#bend"/></svg>Stäbe</label></li>
                        <li class="sub"><button title="Aufklappen"><svg><use href="#chevr"/></svg></button><label><input type="checkbox" class="part"><svg><use href="#bend"/></svg>Lokale Verformungen</label></li>
                        <li class="sub"><button title="Aufklappen"><svg><use href="#chevr"/></svg></button><label><input type="checkbox" class="part"><svg><use href="#bend"/></svg>Schnittgrößen</label></li>
                        <li class="sub"><button title="Aufklappen"><svg><use href="#chevr"/></svg></button><label><input type="checkbox" class="part"><svg><use href="#bend"/></svg>Verzerrungen</label></li>
                        <li class="sub"><button title="Aufklappen"><svg><use href="#chevr"/></svg></button><label><input type="checkbox" class="part"><svg><use href="#bend"/></svg>Spannungen</label></li>
                        <li><button title="Aufklappen"><svg><use href="#chevr"/></svg></button><label><input type="checkbox"><svg><use href="#rampi"/></svg>Kriterien</label></li>
                        <li><button title="Aufklappen"><svg><use href="#chevr"/></svg></button><label><input type="checkbox"><svg><use href="#react"/></svg>Lagerreaktionen</label></li>
                    </ul>

                    <ul class="tree tree-options">
                        <li><button title="Aufklappen"><svg><use href="#chevr"/></svg></button><label><input type="checkbox" checked><svg><use href="#xramp"/></svg>Ergebniswerte</label></li>
                        <li><label><input type="checkbox" checked><svg><use href="#eyeramp"/></svg>Titelinformationen</label></li>
                        <li><label><input type="checkbox" checked><svg><use href="#eyeramp"/></svg>Max/Min-Informationen</label></li>
                        <li><button title="Aufklappen"><svg><use href="#chevr"/></svg></button><label><input type="checkbox" class="part"><svg><use href="#eyeramp"/></svg>Verformung</label></li>
                        <li><button title="Aufklappen"><svg><use href="#chevr"/></svg></button><label><input type="checkbox" class="part"><svg><use href="#eyeramp"/></svg>Linien</label></li>
                        <li><button title="Aufklappen"><svg><use href="#chevr"/></svg></button><label><input type="checkbox" class="part"><svg><use href="#eyeramp"/></svg>Stäbe</label></li>
                        <li><button title="Aufklappen"><svg><use href="#chevr"/></svg></button><label><input type="checkbox" class="part"><svg><use href="#eyeramp"/></svg>Flächen</label></li>
                        <li><button title="Aufklappen"><svg><use href="#chevr"/></svg></button><label><input type="checkbox" class="part"><svg><use href="#eyeramp"/></svg>Werte an Flächen</label></li>
                        <li><button title="Aufklappen"><svg><use href="#chevr"/></svg></button><label><input type="checkbox" class="part"><svg><use href="#rainbow"/></svg>Darstellungsart</label></li>
                        <li><button title="Aufklappen"><svg><use href="#chevr"/></svg></button><label><input type="checkbox" checked><svg><use href="#eyeramp"/></svg>Rippen - Effektiver Beitrag auf Fläche/...</label></li>
                        <li><button title="Aufklappen"><svg><use href="#chevr"/></svg></button><label><input type="checkbox" class="part"><svg><use href="#eyeramp"/></svg>Lagerreaktionen</label></li>
                        <li><button title="Aufklappen"><svg><use href="#chevr"/></svg></button><label><input type="checkbox" class="part"><svg><use href="#eyeramp"/></svg>Ergebnisschnitte</label></li>
                    </ul>
                </div>

                <div class="nav-tabs">
                    <button title="Daten"><svg><use href="#data"/></svg></button>
                    <button title="Zeigen"><svg><use href="#eyebig"/></svg></button>
                    <button title="Ansichten"><svg><use href="#camera"/></svg></button>
                    <button class="current" title="Ergebnisse"><svg><use href="#rampi"/></svg></button>
                </div>
            </aside>

            <div class="right">
                <!-- Modellfenster -->
                <div class="windows">
                    <section class="model">
                        <div class="model-head">
                            <svg class="ico"><use href="#file"/></svg>
                            <h2>Zeitabhängiges Verhalten - 1.rf6*</h2>
                            <button title="Minimieren"><svg><use href="#mino"/></svg></button>
                            <button title="Maximieren"><svg><use href="#maxo"/></svg></button>
                            <button title="Schließen"><svg><use href="#closeo"/></svg></button>
                        </div>
                        <div class="scene">
                            <svg class="drawing">
                                <path d="M0 201.500h1200" stroke="#dedede"/>
                                <use href="#hold" x="35" y="199" width="14" height="20"/>
                                <use href="#hold" x="372" y="199" width="14" height="20"/>
                                <path d="M42 193h337v17H42z" fill="#a6a6a6"/>
                                <path d="M96 209Q211 227 326 209" fill="none" stroke="#2222ff"/>
                                <path d="M211.500 210v8" stroke="#999"/>
                                <circle cx="211" cy="218" r="1.500" fill="#f4e23c"/>
                                <text x="212" y="226" class="val">5.5</text>
                                <path d="M42 201.500h18" stroke="#f00"/><path d="M59 199l9 2.500-9 2.500z" fill="#f00"/>
                                <path d="M42 201v18" stroke="#00f" stroke-width="2"/><path d="M39 218h6l-3 9z" fill="#00c"/>
                                <circle cx="42" cy="201" r="2.500" fill="#5be000"/>
                                <text x="72" y="204" class="ax">X</text><text x="40" y="237" class="az">Z</text>
                                <path d="M39 351.500h18" stroke="#f00"/><path d="M57 349l9 2.500-9 2.500z" fill="#f00"/>
                                <path d="M39 352v18" stroke="#00f"/><path d="M36 369h6l-3 9z" fill="#00c"/>
                                <circle cx="39" cy="352" r="2.500" fill="#5be000"/>
                                <text x="69" y="354" class="ax">X</text><text x="36" y="387" class="az">Z</text>
                                <g class="cube"><rect x="355" y="20" width="45" height="44" rx="1"/><path d="M366.500 20v44M388.500 20v44M355 31.500h45M355 53.500h45" class="thick"/><text x="372" y="46">-Y</text></g>
                            </svg>
                            <div class="info">
                                <p>LF1 - Eigengewicht</p>
                                <p>Statische Analyse</p>
                                <p>Verschiebungen u<sub>Z</sub> [mm]</p>
                            </div>
                            <p class="extremes">max u<sub>Z</sub> : 5.5 | min u<sub>Z</sub> : 0.0 mm</p>
                        </div>
                    </section>

                    <section class="model active">
                        <div class="model-head">
                            <svg class="ico"><use href="#file"/></svg>
                            <h2>Zeitabhängiges Verhalten - 2.rf6*</h2>
                        </div>
                        <div class="scene">
                            <svg class="drawing">
                                <path d="M0 199.500h1200" stroke="#dedede"/>
                                <use href="#hold" x="29" y="198" width="14" height="20"/>
                                <use href="#hold" x="397" y="198" width="14" height="20"/>
                                <path d="M36 190h368v18H36z" fill="#a6a6a6"/>
                                <path d="M95 208Q220 226 345 208" fill="none" stroke="#2222ff"/>
                                <path d="M220.500 208v9" stroke="#999"/>
                                <circle cx="220" cy="217" r="1.500" fill="#f4e23c"/>
                                <text x="221" y="226" class="val">19.5</text>
                                <path d="M36 199.500h18" stroke="#f00"/><path d="M53 197l9 2.500-9 2.500z" fill="#f00"/>
                                <path d="M36 199v18" stroke="#00f" stroke-width="2"/><path d="M33 216h6l-3 9z" fill="#00c"/>
                                <circle cx="36" cy="199" r="2.500" fill="#5be000"/>
                                <text x="66" y="202" class="ax">X</text><text x="34" y="234" class="az">Z</text>
                                <path d="M37 351.500h18" stroke="#f00"/><path d="M55 349l9 2.500-9 2.500z" fill="#f00"/>
                                <path d="M37 352v18" stroke="#00f"/><path d="M34 369h6l-3 9z" fill="#00c"/>
                                <circle cx="37" cy="352" r="2.500" fill="#5be000"/>
                                <text x="67" y="354" class="ax">X</text><text x="35" y="387" class="az">Z</text>
                            </svg>
                            <div class="info">
                                <p>LF2 - Eigengewicht - Zeitabhängig</p>
                                <p>Statische Analyse</p>
                                <p>Verschiebungen u<sub>Z</sub> [mm]</p>
                            </div>
                            <p class="extremes">max u<sub>Z</sub> : 19.5 | min u<sub>Z</sub> : 0.0 mm</p>
                        </div>
                    </section>
                </div>

                <!-- Zusammenfassung -->
                <section class="summary">
                    <div class="panel-head">
                        <h2>Zusammenfassung</h2>
                        <button title="Lösen"><svg><use href="#float"/></svg></button>
                        <button title="Schließen"><svg><use href="#closeb"/></svg></button>
                    </div>
                    <nav class="menubar">
                        <a href="#">Gehe zu</a>
                        <a href="#">Bearbeiten</a>
                        <a href="#">Selektion</a>
                        <a href="#">Ansicht</a>
                        <a href="#">Einstellungen</a>
                    </nav>
                    <div class="toolbar">
                        <div class="combo combo-analysis">
                            <svg class="ico"><use href="#result"/></svg>
                            <select aria-label="Analyse"><option>Statische Analyse</option></select>
                            <svg><use href="#chev"/></svg>
                        </div>
                        <button class="step" title="Vorherige"><svg><use href="#prev"/></svg></button>
                        <button class="step dark" title="Nächste"><svg><use href="#next"/></svg></button>
                        <i class="grip"></i>
                        <div class="combo combo-table">
                            <svg class="ico"><use href="#result"/></svg>
                            <select aria-label="Tabelle"><option>Übersicht</option></select>
                            <svg><use href="#chev"/></svg>
                        </div>
                        <button class="step dark" title="Vorherige"><svg><use href="#prev"/></svg></button>
                        <button class="step" title="Nächste"><svg><use href="#next"/></svg></button>
                        <i class="sep"></i>
                        <div class="combo combo-case">
                            <i class="swatch yellow"></i><i class="swatch cyan"></i><b class="tag">G</b><span class="case-no">LF2</span>
                            <select aria-label="Lastfall der Tabelle"><option>Eigengewicht - Zeitabhängig</option></select>
                            <svg><use href="#chev"/></svg>
                        </div>
                        <button class="step" title="Vorheriger"><svg><use href="#prev"/></svg></button>
                        <button class="step dark" title="Nächster"><svg><use href="#next"/></svg></button>
                        <i class="sep"></i>
                        <button class="tb on" title="Selektion zur Grafik"><svg><use href="#link1"/></svg></button>
                        <button class="tb on" title="Selektion zur Tabelle"><svg><use href="#link2"/></svg></button>
                        <i class="sep"></i>
                        <button class="tb on" title="Ergebnisse"><svg><use href="#eyeramp"/></svg></button>
                        <button class="tb on" title="Werte"><svg><use href="#xramp"/></svg></button>
                        <i class="sep"></i>
                        <button class="tb" title="Alle Zeilen"><svg><use href="#rows"/></svg></button>
                        <button class="tb" title="Zeile einfügen"><svg><use href="#rowsup"/></svg></button>
                        <button class="tb" title="Zeile anhängen"><svg><use href="#rowsup"/></svg></button>
                        <i class="sep"></i>
                        <button class="tb" title="Diagramm"><svg><use href="#chart"/></svg></button>
                        <i class="sep"></i>
                        <button class="tb" title="Excel"><svg><use href="#excel"/></svg></button>
                        <i class="sep"></i>
                        <button class="tb" title="Filter"><svg><use href="#filter"/></svg></button>
                        <i class="sep"></i>
                        <button class="tb" title="Nachkommastellen"><span class="decimals">0,00</span></button>
                        <i class="sep"></i>
                        <button class="tb" title="Hilfe"><svg><use href="#help"/></svg></button>
                    </div>

                    <div class="grid-area">
                        <table>
                            <colgroup><col class="c-row"><col class="c-desc"><col class="c-val"><col class="c-unit"><col></colgroup>
                            <thead>
                                <tr class="strip"><td></td><td></td><td></td><td></td><td></td></tr>
                                <tr><td></td><th>Beschreibung</th><th>Wert</th><th>Einheit</th><th>Anmerkungen</th></tr>
                            </thead>
                            <tbody>
                                <tr class="group"><td colspan="5">Summe der Lasten und die Summe der Lagerkräfte</td></tr>
                                <tr><td></td><td>Summe der Lasten in X</td><td>0.00</td><td>kN</td><td></td></tr>
                                <tr><td></td><td>Summe der Lagerkräfte in X</td><td>0.00</td><td>kN</td><td></td></tr>
                                <tr><td></td><td>Summe der Lasten in Y</td><td>0.00</td><td>kN</td><td></td></tr>
                                <tr><td></td><td>Summe der Lagerkräfte in Y</td><td>0.00</td><td>kN</td><td></td></tr>
                                <tr><td></td><td>Summe der Lasten in Z</td><td>43.50</td><td>kN</td><td></td></tr>
                                <tr><td></td><td>Summe der Lagerkräfte in Z</td><td>43.50</td><td>kN</td><td>Abweichung: 0.00 %</td></tr>
                            </tbody>
                        </table>
                        <div class="scroll">
                            <svg><use href="#chevu"/></svg>
                            <i></i>
                            <svg><use href="#chev"/></svg>
                        </div>
                    </div>

                    <div class="pager">
                        <button title="Erste"><svg><use href="#first"/></svg></button>
                        <button title="Vorherige"><svg><use href="#prev"/></svg></button>
                        <span>1 von 1</span>
                        <button title="Nächste"><svg><use href="#next"/></svg></button>
                        <button title="Letzte"><svg><use href="#last"/></svg></button>
                        <a href="#">Zusammenfassung</a>
                    </div>
                </section>
            </div>
        </main>

        <footer class="status">
            <button>FANG</button>
            <button>RASTER</button>
            <button>LRASTER</button>
            <button>OFANG</button>
            <span class="cell-a"></span>
            <span class="cell-b"></span>
            <span class="cell-ks">KS: Global XYZ</span>
            <span class="cell-plane">Ebene: XY</span>
            <span class="cell-c"></span>
            <span class="cell-c"></span>
            <span class="cell-c"></span>
            <span class="cell-d"></span>
        </footer>
    </div>
</body>
</html>
```
FILE: styles.css
```css
*, *::before, *::after {
    box-sizing: border-box;
}
body {
    margin: 0;
    font-family: "Open Sans", "Noto Sans", sans-serif;
    font-size: 7px;
    line-height: 10px;
    color: #000;
    background: #f7f7f7;
}
h1, h2, p, ul {
    margin: 0;
    padding: 0;
    font-size: inherit;
    font-weight: normal;
}
button, select, input {
    margin: 0;
    font: inherit;
    color: inherit;
}
button {
    display: flex;
    align-items: center;
    justify-content: center;
    padding: 0;
    border: 0;
    background: none;
}
a {
    color: inherit;
    text-decoration: none;
}
svg {
    display: block;
    flex: none;
    width: 6px;
    height: 6px;
}
.sprite {
    position: absolute;
    width: 0;
    height: 0;
}
.ico {
    width: 10px;
    height: 10px;
}
.gray {
    filter: grayscale(1);
    opacity: 0.7;
}
.app {
    display: flex;
    flex-direction: column;
    height: 100vh;
    border: 1px solid #8c8c8c;
}

/* Titelleiste und Menü */
.titlebar {
    display: flex;
    align-items: center;
    height: 19px;
    padding-left: 5px;
    background: #fff;
}
.titlebar h1 {
    flex: 1;
    margin-left: 3px;
}
.win-btn {
    width: 30px;
    height: 18px;
}
.win-btn svg {
    width: 7px;
    height: 7px;
}
.menubar {
    display: flex;
    align-items: center;
    gap: 11px;
    height: 14px;
    padding: 0 5px;
    white-space: nowrap;
}
.license {
    margin-left: auto;
}

/* Symbolleisten */
.toolbar {
    display: flex;
    align-items: center;
    height: 17px;
    border-top: 1px solid #ebebeb;
}
.tb {
    flex: none;
    width: 17px;
    height: 16px;
}
.tb svg {
    width: 12px;
    height: 12px;
}
.drop {
    flex: none;
    width: 8px;
    height: 16px;
}
.drop svg {
    width: 5px;
    height: 5px;
}
.off {
    color: #999;
}
.on {
    background: #cce4f7;
    border: 1px solid #a5d0f2;
}
.more {
    flex: none;
    width: 8px;
}
.sep {
    flex: none;
    width: 4px;
    height: 13px;
    border-left: 1px solid #dcdcdc;
}
.grip {
    flex: none;
    width: 6px;
    height: 12px;
    background: radial-gradient(circle at 3px 1px, #b5b5b5 1px, transparent 1px) 0 0 / 6px 3px;
}
.combo {
    display: flex;
    align-items: center;
    height: 13px;
    padding: 0 3px;
    background: #e7e8f3;
}
.combo select {
    flex: 1;
    min-width: 0;
    height: 12px;
    padding: 0;
    border: 0;
    background: none;
    appearance: none;
}
.combo-case {
    flex: none;
    width: 176px;
}
.combo-cs {
    flex: none;
    width: 95px;
}
.combo-analysis {
    flex: none;
    width: 131px;
}
.combo-table {
    flex: none;
    width: 175px;
}
.combo .ico {
    margin-right: 3px;
}
.swatch {
    flex: none;
    width: 8px;
    height: 8px;
    margin-right: 1px;
}
.combo-cs .swatch {
    margin-right: 4px;
}
.yellow {
    background: #f5c400;
}
.cyan {
    background: #ccffff;
}
.tag {
    width: 20px;
    height: 9px;
    line-height: 9px;
    background: #000;
    color: #fff;
    text-align: center;
    font-weight: normal;
}
.case-no {
    width: 20px;
    margin-left: 3px;
}
.step {
    flex: none;
    width: 11px;
    height: 13px;
    background: #e7e8f3;
}
.dark {
    background: #d0d0d0;
    color: #555;
}
.decimals {
    width: 15px;
    height: 12px;
    border-top: 4px solid #90cf8e;
    line-height: 8px;
    font-size: 6px;
    text-decoration: underline;
}

/* Arbeitsbereich */
.workspace {
    display: flex;
    flex: 1;
    gap: 3px;
    min-height: 0;
    margin-top: 1px;
    border-top: 1px solid #c4c4c4;
}
.panel-head {
    display: flex;
    align-items: center;
    gap: 6px;
    height: 13px;
    padding: 0 4px 0 3px;
    background: #d8e6f3;
}
.panel-head h2 {
    flex: 1;
    font-size: 8px;
    color: #1e2630;
}
.navigator .panel-head h2 {
    font-weight: 600;
}
.panel-head svg {
    width: 7px;
    height: 7px;
}
.navigator {
    display: flex;
    flex-direction: column;
    flex: none;
    width: 176px;
    border-right: 1px solid #d4d4e0;
}
.nav-select {
    display: flex;
    padding: 3px 2px 6px;
}
.nav-select .combo {
    flex: 1;
    background: #e6e6e6;
    color: #8a8a8a;
}
.nav-select .dark {
    border-left: 1px solid #f7f7f7;
}
.nav-select select:disabled {
    color: #8a8a8a;
    opacity: 1;
}
.nav-body {
    display: flex;
    flex-direction: column;
    flex: 1;
    margin-left: 2px;
    padding-top: 2px;
    background: #fff;
}

/* Baum */
.tree {
    display: grid;
    grid-auto-rows: 1fr;
    list-style: none;
}
.tree-results {
    position: relative;
    height: 176px;
    margin-right: 8px;
}
.tree-results::after {
    content: "";
    position: absolute;
    top: -1px;
    left: 0;
    width: 100%;
    height: 95px;
    border: 2px solid #4a7cc8;
    box-shadow: 1px 2px 2px rgba(0, 0, 0, 0.35);
    pointer-events: none;
}
.tree-options {
    height: 183px;
    margin-top: auto;
    padding: 2px 0 36px;
    border-top: 4px solid #f7f7f7;
}
.tree li {
    display: flex;
    align-items: center;
    justify-content: flex-start;
    padding-left: 13px;
    white-space: nowrap;
}
.tree button {
    width: 12px;
    margin-left: -13px;
    margin-right: 1px;
    color: #888;
}
.tree .open {
    color: #222;
}
.tree .sub {
    padding-left: 26px;
}
.tree label {
    display: flex;
    align-items: center;
    gap: 3px;
}
.tree label svg {
    width: 10px;
    height: 10px;
}
.tree input {
    display: grid;
    place-content: center;
    width: 9px;
    height: 9px;
    border: 1px solid #555;
    background: #fff;
    appearance: none;
}
.tree input[type="radio"] {
    border-radius: 50%;
}
.tree input:checked::before {
    content: "";
    width: 6px;
    height: 4px;
    border: solid #333;
    border-width: 0 0 1px 1px;
    transform: rotate(-45deg);
}
.tree input[type="radio"]:checked::before {
    width: 5px;
    height: 5px;
    border: 0;
    border-radius: 50%;
    background: #333;
}
.tree .part {
    border-color: #3a78b0;
    background: #cce4f7;
}
.tree sub {
    font-size: 6px;
    line-height: 0;
    vertical-align: -1px;
}
.nav-tabs {
    display: flex;
    height: 17px;
    margin: 0 0 2px 1px;
}
.nav-tabs button {
    width: 25px;
    background: #ececf2;
    border: 1px solid #d8d8e2;
}
.nav-tabs svg {
    width: 11px;
    height: 11px;
}
.nav-tabs .current {
    background: #fff;
    border-top-color: #fff;
}

/* Modellfenster */
.right {
    display: flex;
    flex-direction: column;
    flex: 1;
    min-width: 0;
}
.windows {
    display: flex;
    flex: 1;
    min-height: 0;
}
.model {
    display: flex;
    flex-direction: column;
    flex: 1 1 50%;
    padding: 0 2px 0 4px;
    border-left: 1px solid #70767e;
    border-top: 1px solid #70767e;
    border-radius: 4px 0 0 0;
    background: linear-gradient(#bccbda, #d8e6f3 18px);
}
.model.active {
    padding: 0 0 0 3px;
    background: linear-gradient(#9ab5d2, #b9d1ea 18px);
}
.model-head {
    display: flex;
    align-items: center;
    gap: 3px;
    height: 18px;
    padding: 0 2px 0 1px;
}
.model-head h2 {
    flex: 1;
    padding-top: 4px;
}
.model-head .ico {
    margin-top: 3px;
}
.model-head button {
    width: 20px;
    height: 12px;
    border: 1px solid #8b98a8;
    border-radius: 2px;
    background: #d3dfeb;
    color: #555;
}
.model-head button svg {
    width: 8px;
    height: 8px;
}
.scene {
    position: relative;
    flex: 1;
    background: #fff;
}
.drawing {
    position: absolute;
    width: 100%;
    height: 100%;
}
.drawing text {
    font-size: 7px;
}
.drawing .val {
    fill: #0000d8;
    font-weight: 600;
}
.drawing .ax {
    fill: #f00;
}
.drawing .az {
    fill: #00f;
}
.cube rect, .cube path {
    fill: none;
    stroke: #222;
}
.cube .thick {
    stroke-width: 2;
}
.drawing .cube text {
    fill: #7df07d;
    font-size: 9px;
    font-weight: bold;
}
.info {
    position: absolute;
    top: 0;
    left: 1px;
    padding-right: 5px;
    border: 2px solid #4a7cc8;
    box-shadow: 1px 2px 2px rgba(0, 0, 0, 0.35);
    font-size: 8px;
    line-height: 11px;
    white-space: nowrap;
}
.active .info {
    left: 0;
    padding-right: 0;
}
.extremes {
    position: absolute;
    left: 3px;
    bottom: 3px;
}
.scene sub {
    line-height: 0;
    vertical-align: -1px;
    font-size: inherit;
}

/* Zusammenfassung */
.summary {
    display: flex;
    flex-direction: column;
    flex: none;
    margin-top: 2px;
}
.summary .toolbar {
    height: 16px;
    border: 0;
}
.summary .tb {
    height: 15px;
}
.grid-area {
    display: flex;
    height: 110px;
    border-bottom: 1px solid #c9c9dc;
    border-top: 1px solid #d0d0d8;
    background: #fff;
}
table {
    flex: 1;
    height: 101px;
    border-collapse: collapse;
    table-layout: fixed;
    line-height: 9px;
    white-space: nowrap;
}
.c-row {
    width: 39px;
}
.c-desc {
    width: 227px;
}
.c-val, .c-unit {
    width: 52px;
}
th, td {
    padding: 0 3px;
    border-right: 1px solid #dcdcdc;
    border-bottom: 1px solid #e4e4e4;
}
th {
    height: 21px;
    font-weight: normal;
    vertical-align: bottom;
    padding-bottom: 1px;
}
thead {
    background: #f0f0f0;
}
.strip td {
    height: 6px;
    background: #e0e0e0;
}
tbody tr {
    background: #fffcf4;
}
tbody tr:nth-child(odd) {
    background: #fff8e6;
}
tbody td:first-child, thead td:first-child {
    background: #e2e2e2;
}
tbody .group td:first-child {
    background: #ebebeb;
}
tbody td:nth-child(3) {
    text-align: right;
    border-right: 0;
}
.scroll {
    display: flex;
    flex-direction: column;
    align-items: center;
    width: 12px;
    padding: 3px 0;
    background: #f0f0f0;
    color: #444;
}
.scroll i {
    width: 10px;
    height: 15px;
    margin-top: 2px;
    margin-bottom: auto;
    background: #cdcdcd;
}
.pager {
    display: flex;
    align-items: center;
    height: 16px;
    color: #888;
}
.pager button {
    width: 12px;
}
.pager span {
    padding: 0 7px;
    color: #000;
}
.pager a {
    padding: 3px 5px 2px;
    background: #fff;
    border: 1px solid #d5d5dc;
    border-top: 0;
    color: #000;
}

/* Statusleiste */
.status {
    display: flex;
    align-items: center;
    justify-content: flex-end;
    gap: 1px;
    height: 13px;
}
.status button {
    height: 12px;
    padding: 0 2px;
    border: 1px solid #d4d4d4;
    background: #efefef;
}
.status span {
    height: 11px;
    padding-left: 2px;
    border-left: 1px solid #dcdcdc;
}
.cell-a {
    width: 73px;
}
.cell-b {
    width: 68px;
}
.cell-ks {
    width: 101px;
}
.cell-plane {
    width: 42px;
}
.cell-c {
    width: 48px;
}
.cell-d {
    width: 13px;
    background: radial-gradient(circle at 1px 1px, #b0b0b0 1px, transparent 1px) 4px 5px / 3px 3px;
}
```
